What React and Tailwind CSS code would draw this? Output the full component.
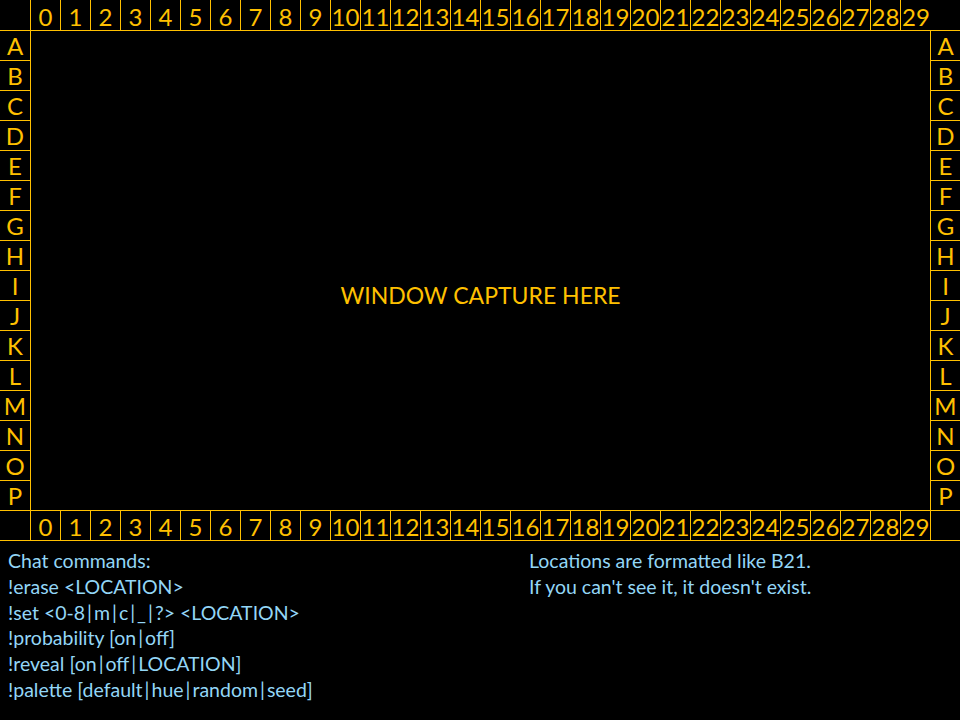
import React from 'react';

const cols = Array.from({ length: 30 }, (_, i) => i);
const rows = 'ABCDEFGHIJKLMNOP'.split('');

const commands = [
  'Chat commands:',
  '!erase <LOCATION>',
  '!set <0-8|m|c|_|?> <LOCATION>',
  '!probability [on|off]',
  '!reveal [on|off|LOCATION]',
  '!palette [default|hue|random|seed]',
];

// pipes get a bit of breathing room, like the original font
const withPipes = (text) =>
  text.split('|').map((part, i) => (
    <React.Fragment key={i}>
      {i > 0 && <span className="mx-[2px]">|</span>}
      {part}
    </React.Fragment>
  ));

const App = () => {
  return (
    <div className="w-[960px] h-[720px] bg-black text-[#ffc000] font-['Lato',sans-serif] overflow-hidden">
      {/* top labels */}
      <div className="flex h-[31px] border-b border-[#ffc000]">
        <div className="w-[31px] border-r border-[#ffc000]" />
        {cols.map(n => (
          <div
            key={n}
            className={`h-[30px] flex items-center justify-center text-[24px] leading-none pt-[3px] ${n < 29 ? 'w-[30px] border-r border-[#ffc000]' : 'w-[30px]'}`}
          >
            {n}
          </div>
        ))}
        <div className="w-[29px]" />
      </div>

      {/* middle */}
      <div className="flex h-[480px] border-b border-[#ffc000]">
        <div className="w-[31px] border-r border-[#ffc000] flex flex-col">
          {rows.map((r, i) => (
            <div
              key={r}
              className={`flex items-center justify-center text-[24px] leading-none ${i < 15 ? 'h-[30px] border-b border-[#ffc000]' : 'h-[29px]'}`}
            >
              {r}
            </div>
          ))}
        </div>
        <div className="w-[899px] flex items-center justify-center text-[23px] pt-[50px]">
          WINDOW CAPTURE HERE
        </div>
        <div className="w-[30px] border-l border-[#ffc000] flex flex-col">
          {rows.map((r, i) => (
            <div
              key={r}
              className={`flex items-center justify-center text-[24px] leading-none ${i < 15 ? 'h-[30px] border-b border-[#ffc000]' : 'h-[29px]'}`}
            >
              {r}
            </div>
          ))}
        </div>
      </div>

      {/* bottom labels */}
      <div className="flex h-[30px] border-b border-[#ffc000]">
        <div className="w-[31px] border-r border-[#ffc000]" />
        {cols.map(n => (
          <div
            key={n}
            className="w-[30px] h-[29px] border-r border-[#ffc000] flex items-center justify-center text-[24px] leading-none pt-[2px]"
          >
            {n}
          </div>
        ))}
        <div className="w-[29px]" />
      </div>

      {/* chat help */}
      <div className="flex text-[#93d6f6] text-[19.5px] leading-[25.8px] pt-[7px]">
        <div className="w-[529px] pl-[8px]">
          {commands.map(c => (
            <div key={c}>{withPipes(c)}</div>
          ))}
        </div>
        <div>
          <div>Locations are formatted like B21.</div>
          <div>If you can't see it, it doesn't exist.</div>
        </div>
      </div>
    </div>
  );
};

export default App;
